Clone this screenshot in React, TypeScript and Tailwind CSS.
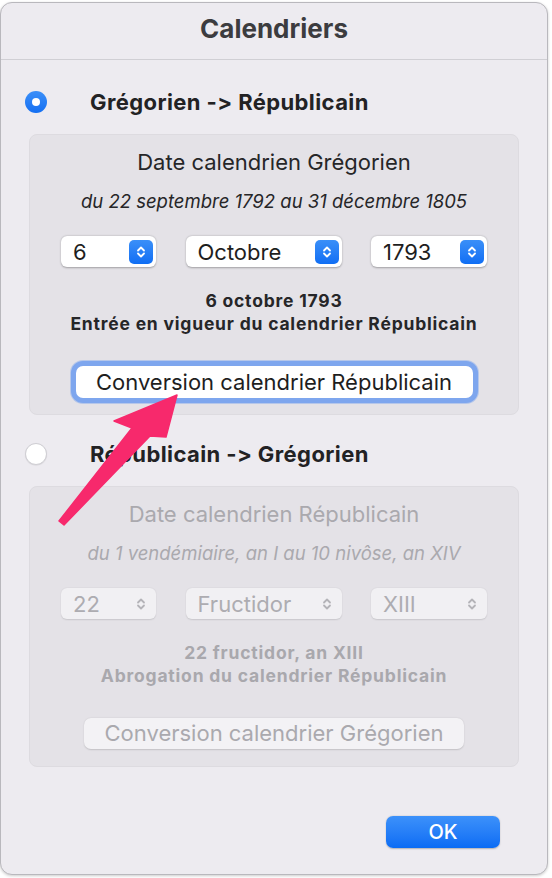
import React from "react";

type SelectProps = { value: string; width: string; disabled?: boolean };

function Chevrons({ color }: { color: string }) {
  return (
    <svg width="12" height="16" viewBox="0 0 12 16" fill="none">
      <path d="M3 6.5 6 3.5 9 6.5" stroke={color} strokeWidth="1.8" strokeLinecap="round" strokeLinejoin="round" />
      <path d="M3 9.5 6 12.5 9 9.5" stroke={color} strokeWidth="1.8" strokeLinecap="round" strokeLinejoin="round" />
    </svg>
  );
}

function Select({ value, width, disabled }: SelectProps) {
  return (
    <div
      className={`flex h-[31px] ${width} items-center justify-between rounded-[6px] pl-[12px] pr-[3px] ${
        disabled ? "bg-[#f1f0f3] text-[#adacb1] shadow-[0_0.5px_1.5px_rgba(0,0,0,0.12)]" : "bg-white text-[#1e1e1e] shadow-[0_0.5px_2px_rgba(0,0,0,0.3)]"
      }`}
    >
      <span className="text-[22px] leading-none">{value}</span>
      {disabled ? (
        <span className="flex h-[24px] w-[24px] items-center justify-center">
          <Chevrons color="#b4b3b8" />
        </span>
      ) : (
        <span className="flex h-[24px] w-[24px] items-center justify-center rounded-[5px] bg-gradient-to-b from-[#3a8ff8] to-[#0f6ef4]">
          <Chevrons color="#ffffff" />
        </span>
      )}
    </div>
  );
}

function Radio({ checked }: { checked?: boolean }) {
  return checked ? (
    <span className="flex h-[22px] w-[22px] items-center justify-center rounded-full bg-gradient-to-b from-[#3b8ff8] to-[#136ff2]">
      <span className="h-[8px] w-[8px] rounded-full bg-white" />
    </span>
  ) : (
    <span className="h-[22px] w-[22px] rounded-full border border-[#cfced3] bg-white shadow-[0_0.5px_1px_rgba(0,0,0,0.1)]" />
  );
}

type GroupProps = {
  title: string;
  range: string;
  values: [string, string, string];
  line1: string;
  line2: string;
  button: string;
  disabled?: boolean;
};

function Group({ title, range, values, line1, line2, button, disabled }: GroupProps) {
  const main = disabled ? "text-[#aaa9ae]" : "text-[#262628]";
  return (
    <div className="mx-[28px] flex h-[281px] flex-col items-center rounded-[8px] border border-[#dddbe0] bg-[#e4e2e7] pt-[15px]">
      <div className={`text-[22px] leading-[24px] ${main}`}>{title}</div>
      <div className={`mt-[16px] text-[18.5px] italic leading-[22px] ${main}`}>{range}</div>
      <div className="mt-[24px] flex w-full justify-between px-[31px]">
        <Select value={values[0]} width="w-[95px]" disabled={disabled} />
        <Select value={values[1]} width="w-[156px]" disabled={disabled} />
        <Select value={values[2]} width="w-[116px]" disabled={disabled} />
      </div>
      <div
        className={`mt-[22px] text-center text-[17.5px] font-bold leading-[23px] tracking-[0.8px] ${
          disabled ? "text-[#a9a8ad]" : "text-[#262628]"
        }`}
      >
        <div>{line1}</div>
        <div>{line2}</div>
      </div>
      {disabled ? (
        <div className="mt-[31px] flex h-[31px] w-[380px] items-center justify-center rounded-[7px] bg-[#f3f2f5] text-[22px] text-[#aaa9ae] shadow-[0_0.5px_1.5px_rgba(0,0,0,0.15)]">
          {button}
        </div>
      ) : (
        <div className="mt-[31px] flex h-[32px] w-[397px] items-center justify-center rounded-[7px] bg-white text-[22px] text-[#1e1e1e] shadow-[0_0_0_5px_#7ea6ee,0_0_0_6px_rgba(126,166,238,0.45)]">
          {button}
        </div>
      )}
    </div>
  );
}

export default function App() {
  return (
    <div className="relative h-[878px] w-[552px] overflow-hidden bg-white font-[family-name:Inter,'Liberation_Sans',sans-serif] [font-feature-settings:'calt'_0]">
      <div className="mt-[2px] flex h-[873px] w-[548px] flex-col rounded-[12px] border border-[#b9b8bd] bg-[#edebf0] shadow-[0_1px_3px_rgba(0,0,0,0.2)]">
        <div className="flex h-[57px] items-center justify-center border-b border-[#d0cfd4] pb-[6px]">
          <span className="text-[26px] font-bold text-[#3c3c3f]">Calendriers</span>
        </div>

        <div className="mt-[30px] flex h-[24px] items-center pl-[24px]">
          <Radio checked />
          <span className="ml-[43px] text-[22px] font-bold tracking-[0.4px] text-[#222224]">Grégorien -&gt; Républicain</span>
        </div>
        <div className="mt-[20px]">
          <Group
            title="Date calendrien Grégorien"
            range="du 22 septembre 1792 au 31 décembre 1805"
            values={["6", "Octobre", "1793"]}
            line1="6 octobre 1793"
            line2="Entrée en vigueur du calendrier Républicain"
            button="Conversion calendrier Républicain"
          />
        </div>

        <div className="mt-[27px] flex h-[24px] items-center pl-[24px]">
          <Radio />
          <span className="ml-[43px] text-[22px] font-bold tracking-[0.4px] text-[#222224]">Républicain -&gt; Grégorien</span>
        </div>
        <div className="mt-[20px]">
          <Group
            title="Date calendrien Républicain"
            range="du 1 vendémiaire, an I au 10 nivôse, an XIV"
            values={["22", "Fructidor", "XIII"]}
            line1="22 fructidor, an XIII"
            line2="Abrogation du calendrier Républicain"
            button="Conversion calendrier Grégorien"
            disabled
          />
        </div>

        <div className="mt-[49px] flex justify-end pr-[47px]">
          <div className="flex h-[32px] w-[114px] items-center justify-center rounded-[7px] bg-gradient-to-b from-[#3c91fa] to-[#0a6cf4] text-[20px] font-medium text-white shadow-[0_0.5px_1.5px_rgba(0,0,0,0.25)]">
            OK
          </div>
        </div>
      </div>

      {/* annotation arrow */}
      <svg className="pointer-events-none absolute left-0 top-0" width="552" height="878" viewBox="0 0 552 878">
        <polygon
          points="177,395 166,437 150,436 64,525 59,521 132,428 114,421"
          fill="#f7296c"
          stroke="#f7296c"
          strokeWidth="1.5"
          strokeLinejoin="round"
        />
      </svg>
    </div>
  );
}
